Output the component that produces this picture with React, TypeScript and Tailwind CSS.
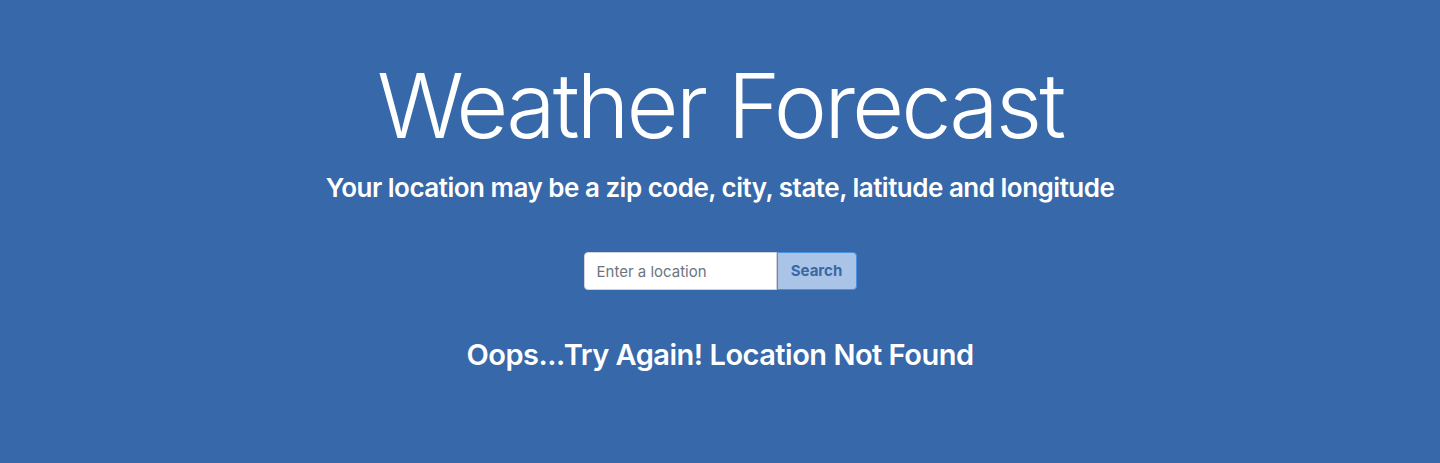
export default function App() {
  return (
    <div
      className="min-h-[463px] w-full bg-[#3768a9] text-white flex flex-col items-center pt-[52px]"
      style={{ fontFamily: "Inter, 'Noto Sans', sans-serif" }}
    >
      {/* Titre */}
      <h1 className="text-[90px] font-light leading-[1.2] tracking-[-3px]">Weather Forecast</h1>
      <h3 className="text-[26px] font-semibold leading-[1.2] tracking-[-0.5px] mt-[12px]">
        Your location may be a zip code, city, state, latitude and longitude
      </h3>
      {/* Formulaire */}
      <form className="flex mt-[49px]" onSubmit={(e) => e.preventDefault()}>
        <input
          type="text"
          placeholder="Enter a location"
          className="w-[193px] h-[38px] bg-white rounded-l-[4px] border border-[#ced4da] px-3 text-[15px] text-[#495057] placeholder:text-[#6c757d] outline-none"
        />
        <button
          type="submit"
          className="w-[80px] h-[38px] bg-[#a9c4e6] border border-[#4a90e2] rounded-r-[4px] text-[#3a67a6] font-bold text-[15px]"
        >
          Search
        </button>
      </form>
      {/* Message d'erreur */}
      <h2 className="text-[29px] font-semibold leading-[1.2] tracking-[-0.5px] mt-[48px]">
        Oops...Try Again! Location Not Found
      </h2>
    </div>
  );
}
